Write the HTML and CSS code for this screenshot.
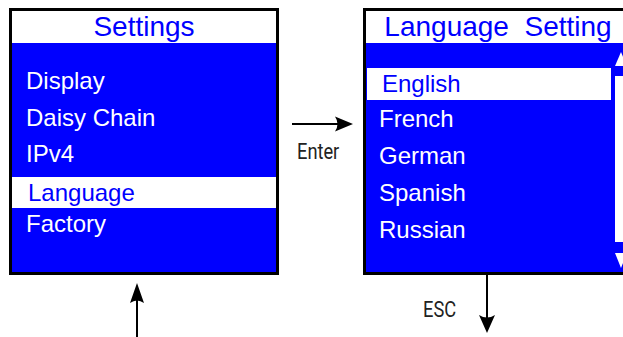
FILE: index.html
```html
<!DOCTYPE html>
<html lang="en">
<head>
    <meta charset="UTF-8">
    <meta name="viewport" content="width=device-width, initial-scale=1.0">
    <title>Settings menu</title>
    <link rel="stylesheet" href="styles.css">
</head>
<body>
<div class="diagram">

    <!-- Settings screen -->
    <div class="stage">
        <section class="screen">
            <div class="screen-title">Settings</div>
            <ul class="menu">
                <li class="item item-display">Display</li>
                <li class="item item-gap">Daisy Chain</li>
                <li class="item item-gap">IPv4</li>
                <li class="item item-sel">Language</li>
                <li class="item item-last">Factory</li>
            </ul>
        </section>
        <div class="below below-left">
            <svg class="arrow-up" width="14" height="54" viewBox="0 0 14 54">
                <line x1="7" y1="10" x2="7" y2="54" stroke="#000" stroke-width="2"/>
                <path d="M7 0 L14 20 Q7 15 0 20 Z" fill="#000"/>
            </svg>
        </div>
    </div>

    <!-- Enter connector -->
    <div class="link-enter">
        <svg class="arrow-right" width="61" height="16" viewBox="0 0 61 16">
            <line x1="0" y1="8" x2="50" y2="8" stroke="#000" stroke-width="2"/>
            <path d="M61 8 L43 0.5 Q48 8 43 15.5 Z" fill="#000"/>
        </svg>
        <span class="link-label">Enter</span>
    </div>

    <!-- Language screen -->
    <div class="stage">
        <section class="screen">
            <div class="screen-title">Language&nbsp; Setting</div>
            <div class="screen-body">
                <ul class="lang-list">
                    <li class="lang lang-sel">English</li>
                    <li class="lang">French</li>
                    <li class="lang">German</li>
                    <li class="lang">Spanish</li>
                    <li class="lang">Russian</li>
                </ul>
                <div class="scroll">
                    <svg class="scroll-btn" width="12" height="14" viewBox="0 0 12 14">
                        <path d="M6 0 L12 14 L0 14 Z" fill="#fff"/>
                    </svg>
                    <div class="scroll-track"></div>
                    <svg class="scroll-btn scroll-down" width="12" height="15" viewBox="0 0 12 15">
                        <path d="M0 0 L12 0 L6 15 Z" fill="#fff"/>
                    </svg>
                </div>
            </div>
        </section>
        <div class="below below-right">
            <span class="link-label esc">ESC</span>
            <svg class="arrow-down" width="16" height="58" viewBox="0 0 16 58">
                <line x1="8" y1="0" x2="8" y2="46" stroke="#000" stroke-width="2"/>
                <path d="M8 58 L0 40 Q8 45 16 40 Z" fill="#000"/>
            </svg>
        </div>
    </div>

</div>
</body>
</html>
```

FILE: styles.css
```css
body {
    margin: 0;
    background: #fff;
    font-family: "Liberation Sans", Arial, sans-serif;
    overflow: hidden;
}
.diagram {
    display: flex;
    align-items: flex-start;
    padding: 8px 0 0 9px;
    width: 700px;
}
.stage {
    display: flex;
    flex-direction: column;
}
.screen {
    width: 270px;
    height: 267px;
    box-sizing: border-box;
    border: 3px solid #000;
    background: #0000ff;
    display: flex;
    flex-direction: column;
}
.screen-title {
    height: 32px;
    line-height: 32px;
    background: #fff;
    color: #0000ff;
    font-size: 28px;
    text-align: center;
    white-space: nowrap;
}
ul {
    list-style: none;
    margin: 0;
    padding: 0;
}

/* settings menu */
.menu {
    padding-top: 22px;
}
.item {
    color: #fff;
    font-size: 24px;
    line-height: 31px;
    padding-left: 14px;
}
.item-gap {
    margin-top: 6px;
}
.item-gap + .item-gap {
    margin-top: 5px;
}
.item-sel {
    margin-top: 8px;
    background: #fff;
    color: #0000ff;
    line-height: 30px;
    padding-top: 1px;
    padding-left: 16px;
}
.item-last {
    line-height: 30px;
    padding-top: 1px;
}

/* language menu */
.screen-body {
    flex: 1;
    display: flex;
}
.lang-list {
    flex: 1;
    padding-top: 25px;
}
.lang {
    color: #fff;
    font-size: 24px;
    line-height: 37px;
    padding-left: 13px;
}
.lang-sel {
    margin-left: 1px;
    background: #fff;
    color: #0000ff;
    line-height: 32px;
    padding-left: 15px;
}
.scroll {
    width: 12px;
    margin: 0 3px 0 4px;
    padding-top: 9px;
    display: flex;
    flex-direction: column;
}
.scroll-btn {
    display: block;
}
.scroll-track {
    height: 166px;
    margin-top: 10px;
    background: #fff;
}
.scroll-down {
    margin-top: 11px;
}

/* connectors */
.link-enter {
    width: 84px;
    flex-shrink: 0;
    display: flex;
    flex-direction: column;
    align-items: flex-start;
    padding-top: 108px;
}
.arrow-right {
    display: block;
    margin-left: 13px;
}
.link-label {
    display: inline-block;
    font-family: Roboto, "Liberation Sans", sans-serif;
    font-size: 22px;
    line-height: 20px;
    color: #222;
    transform: scaleX(0.83);
    transform-origin: left center;
}
.link-enter .link-label {
    margin: 10px 0 0 18px;
}
.below {
    display: flex;
}
.arrow-up {
    display: block;
    margin: 8px 0 0 121px;
}
.below-right {
    align-items: flex-start;
}
.esc {
    width: 32px;
    margin: 25px 0 0 60px;
}
.arrow-down {
    display: block;
    margin-left: 24px;
}
```
